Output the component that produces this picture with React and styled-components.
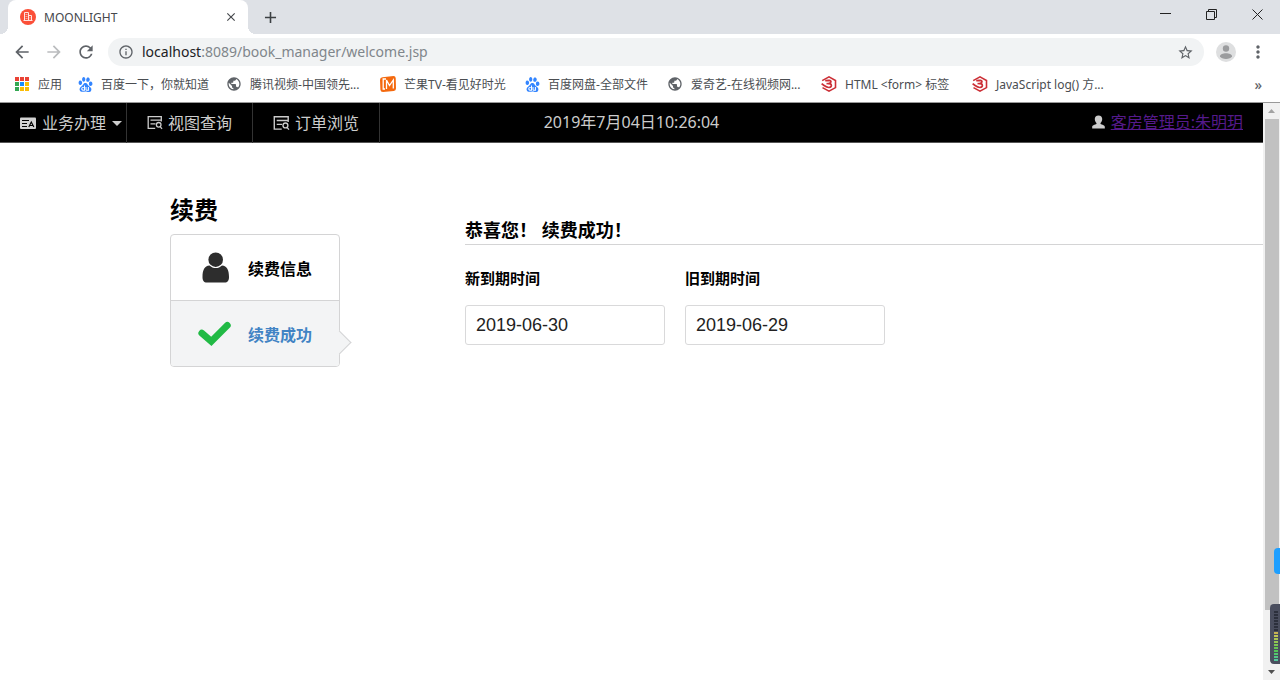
import { useState } from "react";
import styled, { createGlobalStyle, css } from "styled-components";
import {
  MdArrowBack,
  MdArrowForward,
  MdClose,
  MdInfoOutline,
  MdMoreVert,
  MdPublic,
  MdRefresh,
  MdStarBorder,
  MdAdd,
} from "react-icons/md";
import { SiBaidu } from "react-icons/si";

const GlobalStyle = createGlobalStyle`
  * {
    box-sizing: border-box;
  }
  body {
    margin: 0;
    background: #fff;
    color: #000;
    font-family: "Noto Sans", "Noto Sans CJK SC", sans-serif;
    font-size: 16px;
  }
  button {
    padding: 0;
    border: 0;
    background: transparent;
    color: inherit;
    font: inherit;
    cursor: pointer;
  }
  svg {
    display: block;
    flex: none;
  }
`;

const Window = styled.div`
  position: relative;
  height: 100vh;
  display: flex;
  flex-direction: column;
  overflow: hidden;
`;

/* ---------- browser chrome ---------- */

const TabStrip = styled.div`
  height: 34px;
  flex: none;
  padding-left: 8px;
  display: flex;
  background: #dee1e6;
`;

const Tab = styled.div`
  position: relative;
  width: 240px;
  padding: 0 10px 0 12px;
  display: flex;
  align-items: center;
  gap: 8px;
  background: #fff;
  border-radius: 8px 8px 0 0;
  font-size: 12px;
  color: #45484c;

  &::before,
  &::after {
    content: "";
    position: absolute;
    bottom: 0;
    width: 8px;
    height: 8px;
  }
  &::before {
    left: -8px;
    background: radial-gradient(circle at 0 0, transparent 8px, #fff 8px);
  }
  &::after {
    right: -8px;
    background: radial-gradient(circle at 100% 0, transparent 8px, #fff 8px);
  }
`;

const TabTitle = styled.span`
  flex: 1;
`;

const NewTab = styled.button`
  width: 44px;
  display: flex;
  align-items: center;
  justify-content: center;
  color: #3c4043;
`;

const WindowControls = styled.div`
  height: 28px;
  margin-left: auto;
  display: flex;
`;

const WindowButton = styled.button`
  width: 46px;
  display: flex;
  align-items: center;
  justify-content: center;
`;

const Toolbar = styled.div`
  height: 36px;
  flex: none;
  padding: 0 6px;
  display: flex;
  align-items: center;
`;

const ToolButton = styled.button`
  width: 32px;
  height: 28px;
  display: flex;
  align-items: center;
  justify-content: center;
  color: ${(props) => (props.$faded ? "#babcbe" : "#5f6368")};
`;

const AddressBar = styled.div`
  flex: 1;
  height: 28px;
  margin: 0 6px;
  padding: 0 10px;
  display: flex;
  align-items: center;
  gap: 8px;
  border-radius: 14px;
  background: #f1f3f4;
  color: #5f6368;
`;

const Address = styled.div`
  flex: 1;
  padding-bottom: 2px;
  font-size: 14px;
  color: #80868b;
  outline: none;

  b {
    font-weight: 400;
    color: #202124;
  }
`;

const Bookmarks = styled.nav`
  height: 32px;
  flex: none;
  padding: 0 18px 4px 14px;
  display: flex;
  align-items: center;
  gap: 16px;
  font-size: 12px;
`;

const Bookmark = styled.a`
  min-width: ${(props) => props.$width}px;
  display: flex;
  align-items: center;
  gap: 8px;
  color: #4a4d51;
  text-decoration: none;
  white-space: nowrap;
`;

const MoreBookmarks = styled.button`
  margin-left: auto;
  font-size: 14px;
  font-weight: 500;
  color: #5f6368;
`;

const Viewport = styled.div`
  flex: 1;
  min-height: 0;
  display: flex;
  border-top: 1px solid #999;
`;

const Page = styled.div`
  flex: 1;
  min-width: 0;
`;

const ScrollBar = styled.div`
  width: 17px;
  flex: none;
  display: flex;
  flex-direction: column;
  background: #f1f1f1;
`;

const ScrollButton = styled.button`
  height: 16px;
  flex: none;
  display: flex;
  align-items: center;
  justify-content: center;
  color: ${(props) => (props.$disabled ? "#a3a3a3" : "#505050")};
`;

const ScrollTrack = styled.div`
  flex: 1;
  padding: 0 1px 0 2px;
`;

const ScrollThumb = styled.div`
  height: 90%;
  background: #c1c1c1;
`;

/* ---------- site header ---------- */

const Header = styled.header`
  height: 40px;
  display: grid;
  grid-template-columns: 1fr auto 1fr;
  align-items: stretch;
  background: #000;
  color: #ccc;
  border-bottom: 1px solid #555;
  line-height: 38px;
`;

const Menu = styled.nav`
  display: flex;
`;

const MenuItem = styled.button`
  padding: 0 ${(props) => (props.$dropdown ? "4px" : "20px")} 0 20px;
  display: flex;
  align-items: center;
  gap: ${(props) => (props.$dropdown ? "6px" : "5px")};
  border-right: 1px solid #333;
  white-space: nowrap;
`;

const Clock = styled.time`
  padding-bottom: 2px;
`;

const Account = styled.div`
  padding: 0 20px 2px 0;
  display: flex;
  align-items: center;
  justify-content: flex-end;
  gap: 6px;
`;

const AccountLink = styled.a`
  color: #551a8b;
`;

/* ---------- content ---------- */

const Main = styled.main`
  padding: 48px 0 0 170px;
  display: flex;
  align-items: flex-start;
  gap: 125px;
`;

const Sidebar = styled.aside`
  width: 170px;
  flex: none;
`;

const Title = styled.h1`
  margin: 0 0 5px;
  font-size: 24px;
  line-height: 38px;
`;

const Steps = styled.ol`
  margin: 0;
  padding: 0;
  list-style: none;
  border: 1px solid #d4d4d5;
  border-radius: 4px;
`;

const Step = styled.li`
  position: relative;
  height: 65px;
  padding-left: 27px;
  display: flex;
  align-items: center;
  gap: 16px;
  font-weight: 700;

  & + & {
    height: 66px;
    border-top: 1px solid #d4d4d5;
  }

  ${(props) =>
    props.$active &&
    css`
      background: #f3f4f5;
      border-radius: 0 0 3px 3px;
      color: #4183c4;

      &::after {
        content: "";
        position: absolute;
        right: -9px;
        bottom: 15px;
        width: 16px;
        height: 16px;
        background: #f3f4f5;
        border: solid #d4d4d5;
        border-width: 1px 1px 0 0;
        transform: rotate(45deg);
      }
    `}
`;

const Form = styled.form`
  flex: 1;
  padding-top: 26px;
`;

const FormHeading = styled.h2`
  margin: 0 0 21px;
  font-size: 18px;
  line-height: 27px;
  border-bottom: 1px solid #d4d4d5;
`;

const Fields = styled.div`
  display: flex;
  gap: 20px;
`;

const Field = styled.div`
  width: 200px;
  display: flex;
  flex-direction: column;
  gap: 15px;
`;

const Label = styled.label`
  font-size: 15px;
  font-weight: 700;
  line-height: 24px;
`;

const Input = styled.input`
  width: 100%;
  height: 40px;
  padding: 0 10px;
  border: 1px solid #d9d9da;
  border-radius: 3px;
  font-family: "Liberation Sans", Arial, sans-serif;
  font-size: 18px;
  color: #222;
  outline: none;
`;

/* ---------- desktop widgets over the right edge ---------- */

const SideHandle = styled.div`
  position: absolute;
  right: 0;
  bottom: 106px;
  width: 6px;
  height: 26px;
  border-radius: 4px 0 0 4px;
  background: #1e9fff;
`;

const Meter = styled.div`
  position: absolute;
  right: 0;
  bottom: 16px;
  width: 10px;
  height: 60px;
  padding: 7px 2px 0 4px;
  border-radius: 4px 0 0 4px;
  background: #4a4e5e;
`;

/* ---------- icons ---------- */

const SiteIcon = () => (
  <svg width="16" height="16" viewBox="0 0 16 16">
    <circle cx="8" cy="8" r="8" fill="#fb4f38" />
    <g fill="none" stroke="#fff" strokeWidth="1" opacity="0.85">
      <path d="M4.500 11.500v-8h4v8M8.500 6.500h3v5M3.500 11.500h9" />
      <path d="M5.500 5.500h2M5.500 7.500h2M5.500 9.500h2M9.500 8.500h1M9.500 10h1" opacity="0.6" />
    </g>
  </svg>
);

const appColors = [
  "#ea4335", "#ea4335", "#ea4335",
  "#34a853", "#1a8cff", "#fbbc05",
  "#34a853", "#fbbc05", "#fbbc05",
];

const AppsIcon = () => (
  <svg width="16" height="16" viewBox="0 0 16 16">
    {appColors.map((color, i) => (
      <rect
        key={i}
        x={1 + (i % 3) * 5}
        y={1 + Math.floor(i / 3) * 5}
        width="4"
        height="4"
        fill={color}
      />
    ))}
  </svg>
);

const MangoIcon = () => (
  <svg width="16" height="16" viewBox="0 0 16 16">
    <path d="M2.500 1.200 13.500 0Q15.500 0 15.700 2L16 12.500Q16 14.800 13.800 15L3 16Q.6 16 .4 13.800L0 4Q0 1.500 2.500 1.200z" fill="#f4690e" />
    <path d="M6 3H3.200v10H5M6.500 13V4l3 5.500L13.300 4v8.500" fill="none" stroke="#fff" strokeWidth="1.300" />
  </svg>
);

const W3Icon = () => (
  <svg width="16" height="16" viewBox="0 0 16 16" fill="none" stroke="#cc2f36">
    <path d="M1.200 4.600 8 .9l6.500 3.600v7.100L8 15.100l-6.500-3.500" strokeWidth="1.600" />
    <path d="M4.200 4.700 8.200 4.400c2.500.2 2.300 2.900-.6 3.200 3.300-.1 3.900 3.400.6 3.900C5.500 11.800 3.500 9.600.6 7.800" strokeWidth="1.700" />
    <path d="M8 7.600H5.500" strokeWidth="1.600" />
  </svg>
);

const AvatarIcon = () => (
  <svg width="20" height="20" viewBox="0 0 20 20">
    <circle cx="10" cy="10" r="10" fill="#dedfe0" />
    <circle cx="10" cy="6.500" r="3.200" fill="#9b9c9e" />
    <path d="M4 14.300c0-4 12-4 12 0-1.500 3.500-10.500 3.500-12 0z" fill="#9b9c9e" />
  </svg>
);

const CardIcon = () => (
  <svg width="16" height="13" viewBox="0 0 16 13">
    <rect y="0.500" width="16" height="11.500" rx="1" fill="#d2d2d2" />
    <path d="M2 3.500h7M2 6.500h5M2 9.500h5" stroke="#000" />
    <path d="M8.800 10 11.300 5l2.500 5M9.800 8.500h3" fill="none" stroke="#000" strokeWidth="1.200" />
  </svg>
);

const QueryIcon = ({ size = 16 }) => (
  <svg width={size} height={size} viewBox="0 0 16 16" fill="none" stroke="#ccc" strokeWidth="1.300">
    <path d="M14.300 6.500V1.700H1.200v11.600h7M3.500 5.200h10.700M3.500 8.800h5" />
    <circle cx="11.700" cy="9.800" r="2.300" />
    <path d="m13.200 11.600 1.800 2.200" />
  </svg>
);

const UserIcon = () => (
  <svg width="13" height="16" viewBox="0 0 14 16" fill="#ccc">
    <path d="M7 1c2.700 0 4 1.600 4 3.900 0 1.800-.8 3.400-1.800 4.200v1c1.500.7 4.600 1.200 4.600 3.200V15H.2v-1.700c0-2 3.100-2.500 4.600-3.200v-1C3.800 8.300 3 6.700 3 4.900 3 2.600 4.300 1 7 1z" />
  </svg>
);

const PersonIcon = () => (
  <svg width="34" height="34" viewBox="0 0 34 34" fill="#2d2d2d">
    <circle cx="17.700" cy="8.700" r="7.300" />
    <path d="M11.500 14.500c3.500 3.400 9 3.400 12.500 0 5 .4 7 4.500 7 11.500 0 3.500-1.200 5.500-4.500 5.500H9c-3.300 0-4.500-2-4.500-5.500 0-7 2-11.100 7-11.500z" />
  </svg>
);

const CheckIcon = () => (
  <svg width="34" height="34" viewBox="0 0 34 34">
    <path d="M3.800 16.200 13.300 24.300 29.300 8.400" fill="none" stroke="#21ba45" strokeWidth="6.800" strokeLinecap="round" strokeLinejoin="miter" />
  </svg>
);

const Triangle = ({ up, width = 7, height = 4 }) => (
  <svg width={width} height={height} viewBox="0 0 8 4" preserveAspectRatio="none" fill="currentColor">
    <path d={up ? "M0 4 4 0l4 4z" : "M0 0h8L4 4z"} />
  </svg>
);

const baidu = <SiBaidu size={15} color="#3385ff" />;
const globe = <MdPublic size={16} color="#5f6368" />;

const bookmarks = [
  { icon: <AppsIcon />, label: "应用", width: 48 },
  { icon: baidu, label: "百度一下，你就知道", width: 132 },
  { icon: globe, label: "腾讯视频-中国领先...", width: 138 },
  { icon: <MangoIcon />, label: "芒果TV-看见好时光", width: 129 },
  { icon: baidu, label: "百度网盘-全部文件", width: 126 },
  { icon: globe, label: "爱奇艺-在线视频网...", width: 138 },
  { icon: <W3Icon />, label: "HTML <form> 标签", width: 135 },
  { icon: <W3Icon />, label: "JavaScript log() 方...", width: 138 },
];

const meterBars = Array.from({ length: 17 }, (_, i) => {
  if (i < 7) return "#2c303c";
  return `hsl(${50 + (i - 7) * 12}, 50%, 55%)`;
});

const BrowserChrome = () => (
  <>
    <TabStrip>
      <Tab>
        <SiteIcon />
        <TabTitle>MOONLIGHT</TabTitle>
        <button aria-label="关闭标签页">
          <MdClose size={14} />
        </button>
      </Tab>
      <NewTab aria-label="新标签页">
        <MdAdd size={19} />
      </NewTab>
      <WindowControls>
        <WindowButton aria-label="最小化">
          <svg width="11" height="11" viewBox="0 0 11 11" stroke="#222">
            <path d="M0 4.500h11" />
          </svg>
        </WindowButton>
        <WindowButton aria-label="还原">
          <svg width="11" height="11" viewBox="0 0 11 11" fill="none" stroke="#222">
            <path d="M.5 2.500h8v8h-8zM2.500 2.500v-2h8v8h-2" />
          </svg>
        </WindowButton>
        <WindowButton aria-label="关闭">
          <svg width="11" height="11" viewBox="0 0 11 11" stroke="#222">
            <path d="m.5.5 10 10M10.500.5l-10 10" />
          </svg>
        </WindowButton>
      </WindowControls>
    </TabStrip>
    <Toolbar>
      <ToolButton aria-label="后退">
        <MdArrowBack size={20} />
      </ToolButton>
      <ToolButton aria-label="前进" $faded>
        <MdArrowForward size={20} />
      </ToolButton>
      <ToolButton aria-label="刷新">
        <MdRefresh size={20} />
      </ToolButton>
      <AddressBar>
        <MdInfoOutline size={16} />
        <Address role="textbox" aria-label="地址栏" tabIndex={0}>
          <b>localhost</b>:8089/book_manager/welcome.jsp
        </Address>
        <button aria-label="收藏">
          <MdStarBorder size={17} />
        </button>
      </AddressBar>
      <ToolButton aria-label="用户">
        <AvatarIcon />
      </ToolButton>
      <ToolButton aria-label="菜单">
        <MdMoreVert size={20} />
      </ToolButton>
    </Toolbar>
    <Bookmarks>
      {bookmarks.map((item) => (
        <Bookmark href="#" key={item.label} $width={item.width}>
          {item.icon}
          {item.label}
        </Bookmark>
      ))}
      <MoreBookmarks>»</MoreBookmarks>
    </Bookmarks>
  </>
);

const App = () => {
  const [newDate, setNewDate] = useState("2019-06-30");
  const [oldDate, setOldDate] = useState("2019-06-29");

  return (
    <Window>
      <GlobalStyle />
      <BrowserChrome />
      <Viewport>
        <Page>
          <Header>
            <Menu>
              <MenuItem $dropdown>
                <CardIcon />
                业务办理
                <Triangle width={10} height={5} />
              </MenuItem>
              <MenuItem>
                <QueryIcon />
                视图查询
              </MenuItem>
              <MenuItem>
                <QueryIcon size={17} />
                订单浏览
              </MenuItem>
            </Menu>
            <Clock>2019年7月04日10:26:04</Clock>
            <Account>
              <UserIcon />
              <AccountLink href="#">客房管理员:朱明玥</AccountLink>
            </Account>
          </Header>
          <Main>
            <Sidebar>
              <Title>续费</Title>
              <Steps>
                <Step>
                  <PersonIcon />
                  续费信息
                </Step>
                <Step $active>
                  <CheckIcon />
                  续费成功
                </Step>
              </Steps>
            </Sidebar>
            <Form>
              <FormHeading>恭喜您！ 续费成功！</FormHeading>
              <Fields>
                <Field>
                  <Label htmlFor="newDate">新到期时间</Label>
                  <Input
                    id="newDate"
                    value={newDate}
                    onChange={(e) => setNewDate(e.target.value)}
                  />
                </Field>
                <Field>
                  <Label htmlFor="oldDate">旧到期时间</Label>
                  <Input
                    id="oldDate"
                    value={oldDate}
                    onChange={(e) => setOldDate(e.target.value)}
                  />
                </Field>
              </Fields>
            </Form>
          </Main>
        </Page>
        <ScrollBar>
          <ScrollButton aria-label="向上滚动" $disabled>
            <Triangle up />
          </ScrollButton>
          <ScrollTrack>
            <ScrollThumb />
          </ScrollTrack>
          <ScrollButton aria-label="向下滚动">
            <Triangle />
          </ScrollButton>
        </ScrollBar>
      </Viewport>
      <SideHandle />
      <Meter>
        <svg width="4" height="51" viewBox="0 0 4 51">
          {meterBars.map((color, i) => (
            <rect key={i} y={i * 3} width="4" height="2" fill={color} />
          ))}
        </svg>
      </Meter>
    </Window>
  );
};

export default App;
